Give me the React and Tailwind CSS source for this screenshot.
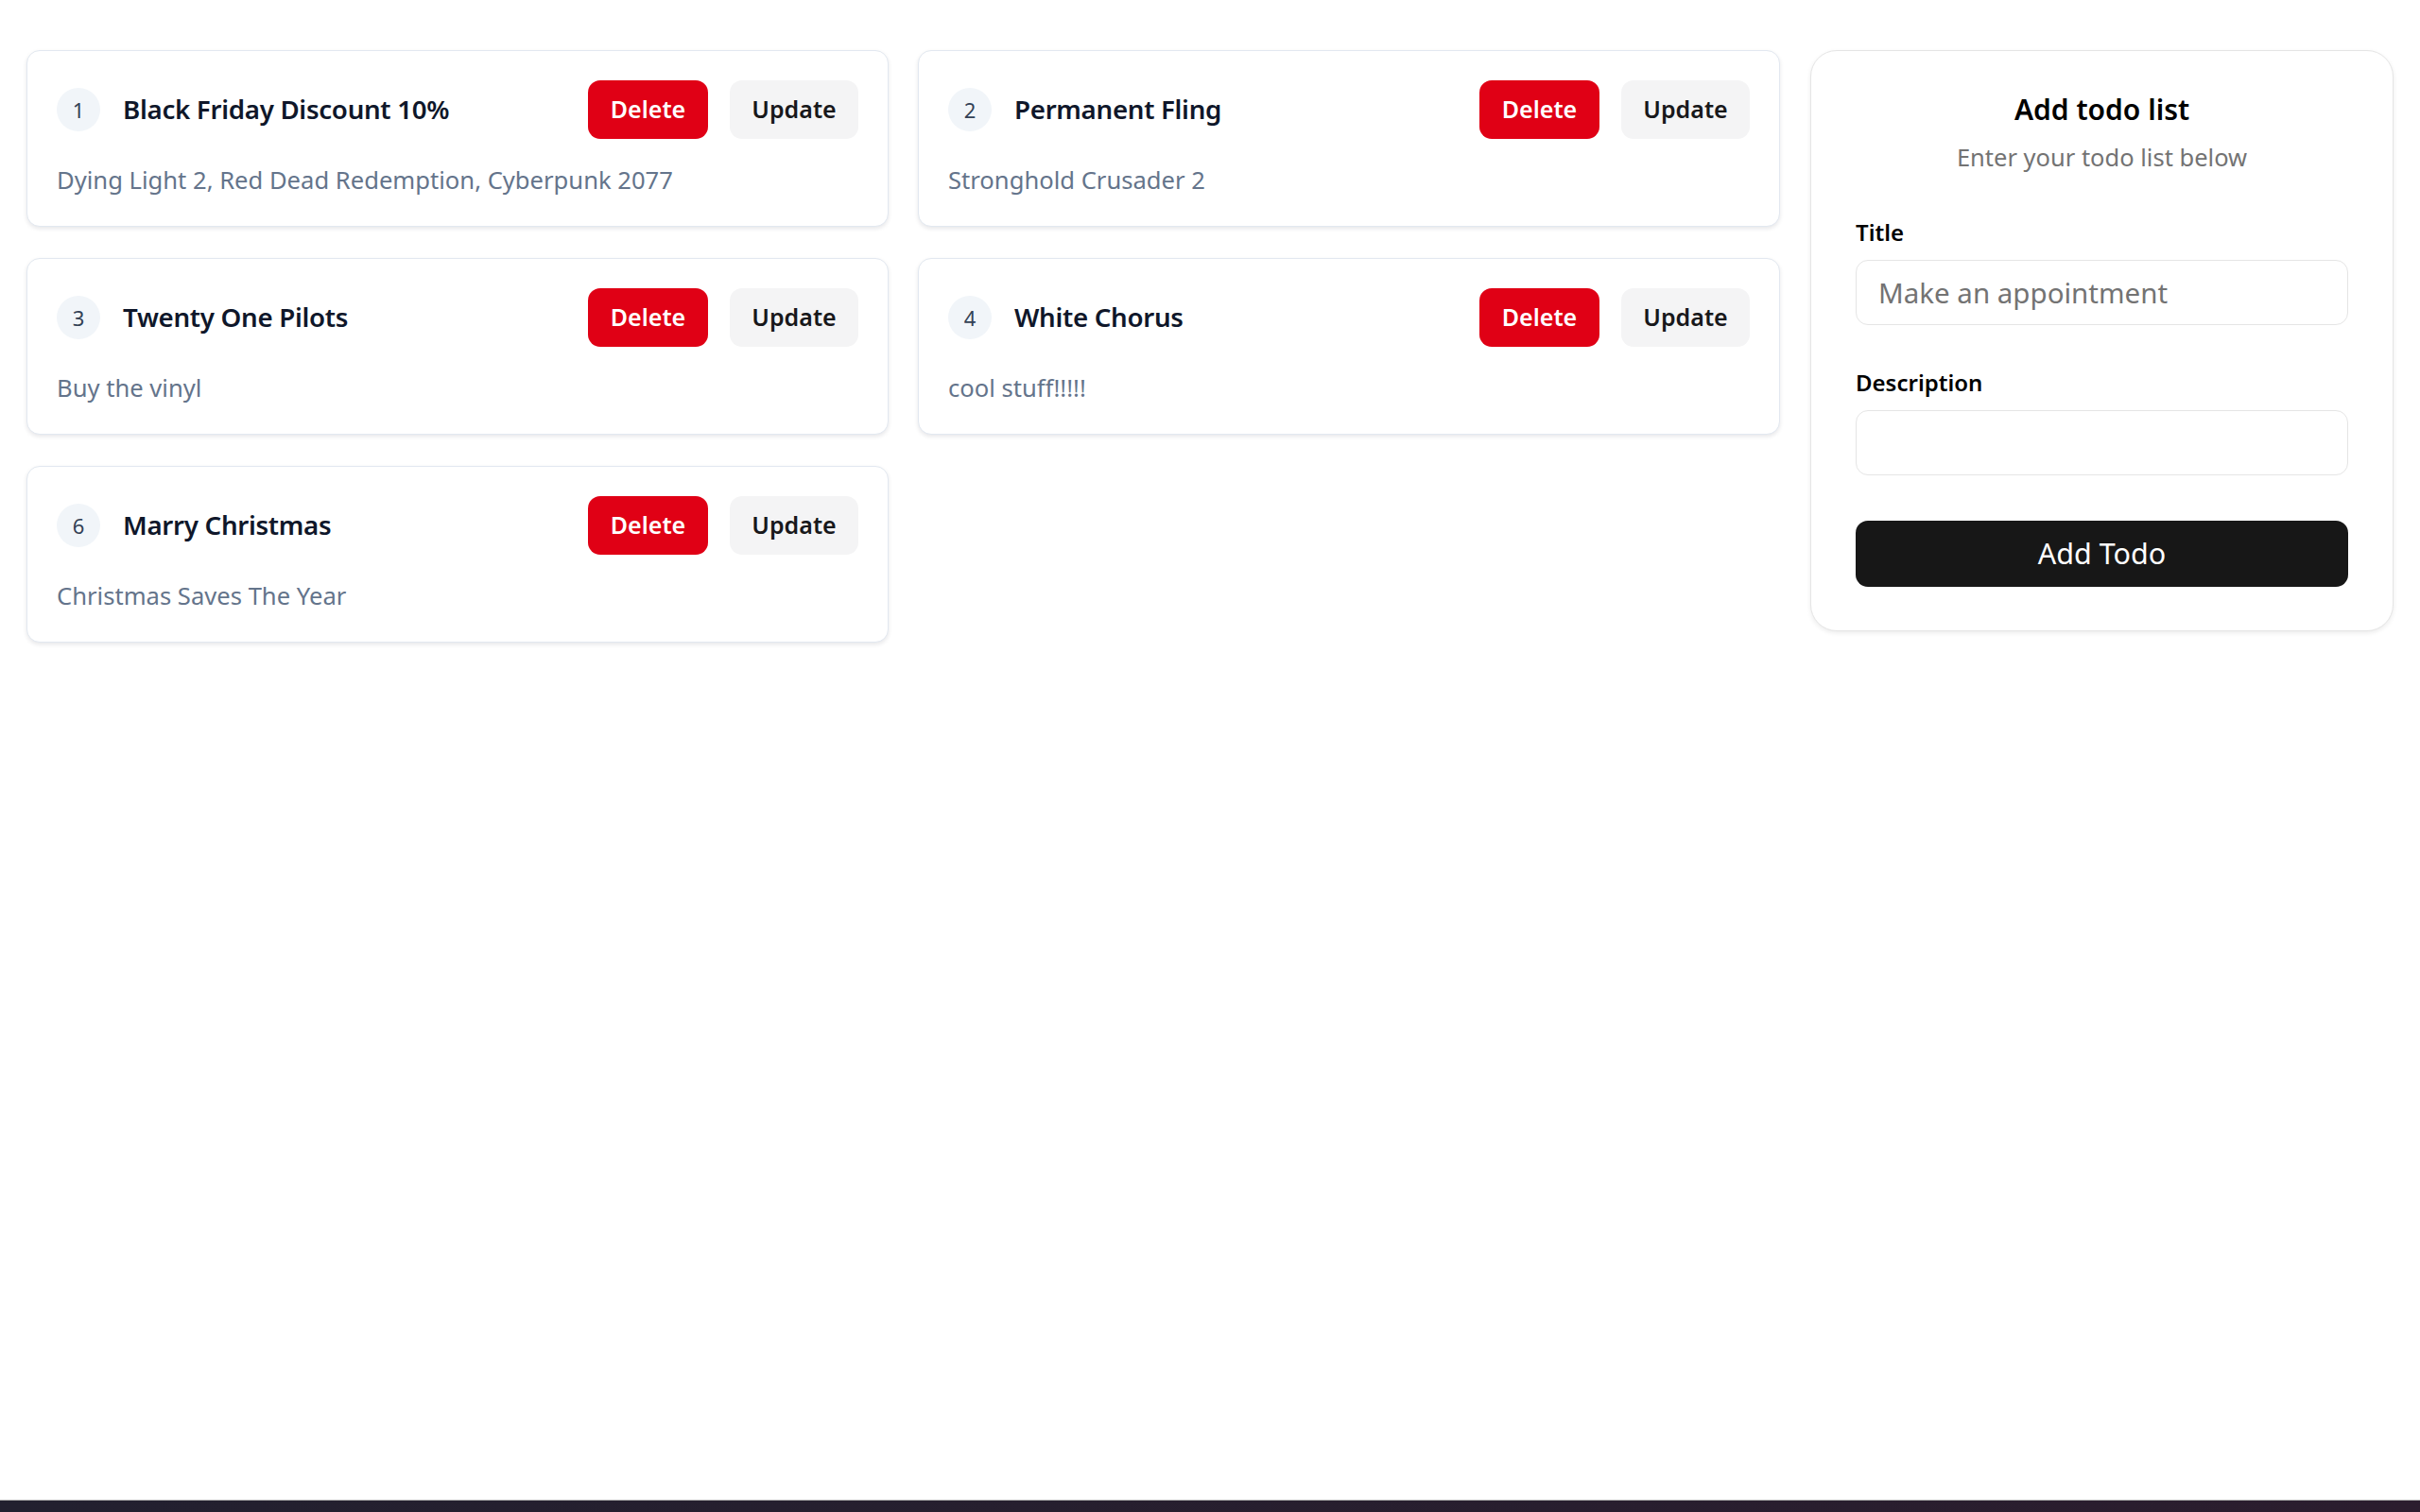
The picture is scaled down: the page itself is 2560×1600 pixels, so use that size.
import React from "react";

const todos = [
  { id: 1, title: "Black Friday Discount 10%", desc: "Dying Light 2, Red Dead Redemption, Cyberpunk 2077" },
  { id: 2, title: "Permanent Fling", desc: "Stronghold Crusader 2" },
  { id: 3, title: "Twenty One Pilots", desc: "Buy the vinyl" },
  { id: 4, title: "White Chorus", desc: "cool stuff!!!!!" },
  { id: 6, title: "Marry Christmas", desc: "Christmas Saves The Year" },
];

function TodoCard({ todo }) {
  return (
    <div className="rounded-[14px] border border-[#e2e8f0] bg-white p-[31px] shadow-[0_2px_4px_rgba(15,23,42,0.10)]">
      <div className="flex h-[62px] items-center">
        <div className="flex h-[46px] w-[46px] shrink-0 items-center justify-center rounded-full bg-[#f1f5f9] text-[22px] text-[#334155]">
          {todo.id}
        </div>
        <div className="ml-[24px] flex-1 text-[27.7px] font-semibold tracking-[-0.3px] text-[#0f172a]">{todo.title}</div>
        <button className="h-[62px] w-[127px] rounded-[13px] bg-[#e00015] text-[25px] font-semibold text-white">
          Delete
        </button>
        <button className="ml-[23px] h-[62px] w-[136px] rounded-[13px] bg-[#f4f4f5] text-[25px] font-semibold text-[#18181b]">
          Update
        </button>
      </div>
      <div className="mt-[27px] text-[25.6px] leading-[34px] text-[#64748b]">{todo.desc}</div>
    </div>
  );
}

export default function App() {
  return (
    <div className="flex h-[1600px] flex-col bg-white font-['Noto_Sans',sans-serif]">
      <div className="flex flex-1 items-start gap-[32px] px-[28px] pt-[53px]">
        <div className="grid flex-1 grid-cols-2 items-start gap-x-[31px] gap-y-[33px]">
          {todos.map((t) => (
            <TodoCard key={t.id} todo={t} />
          ))}
        </div>
        <div className="w-[617px] shrink-0 rounded-[28px] border border-[#e5e5e5] bg-white px-[47px] pb-[46px] pt-[44px] shadow-[0_2px_5px_rgba(0,0,0,0.08)]">
          <div className="text-center text-[30px] font-semibold leading-[36px] text-black">Add todo list</div>
          <div className="mt-[16px] text-center text-[25.5px] leading-[32px] text-[#737373]">Enter your todo list below</div>
          <div className="mt-[49px] text-[24px] font-semibold leading-[30px] text-black">Title</div>
          <input
            className="mt-[14px] h-[69px] w-full rounded-[13px] border border-[#e5e5e5] px-[23px] text-[29.5px] text-black outline-none placeholder:text-[#737373]"
            placeholder="Make an appointment"
          />
          <div className="mt-[46px] text-[24px] font-semibold leading-[30px] text-black">Description</div>
          <input className="mt-[14px] h-[69px] w-full rounded-[13px] border border-[#e5e5e5] px-[23px] text-[29.5px] outline-none" />
          <button className="mt-[48px] h-[70px] w-full rounded-[13px] bg-[#171717] text-[30.5px] text-white">Add Todo</button>
        </div>
      </div>
      <div className="h-[13px] border-t border-[#a3a3a3] bg-gradient-to-r from-[#22202f] to-[#2b1d2e]" />
    </div>
  );
}
